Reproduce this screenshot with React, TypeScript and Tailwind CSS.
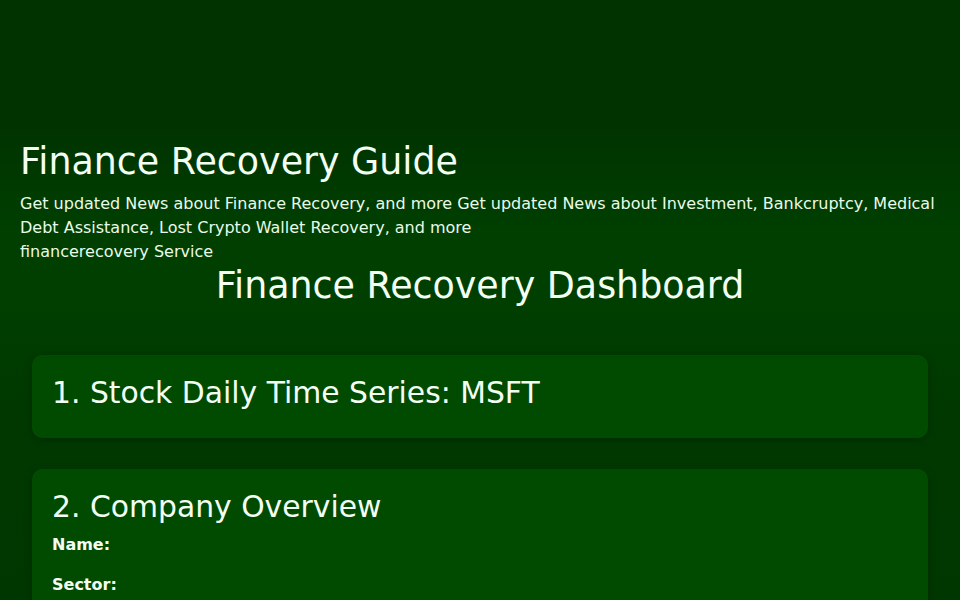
import React from "react";

export default function App() {
  return (
    <div className="min-h-screen w-full font-['DejaVu_Sans','Liberation_Sans',sans-serif] text-[#f4fff4] bg-[linear-gradient(to_bottom,#003300_0px,#003300_125px,#003f00_230px,#003f00_300px,#003900_400px,#003700_600px)]">
      <div className="h-[120px]" />
      <header className="px-5 pt-5">
        <h1 className="text-[36.4px] leading-[43px] font-normal mb-[9px]">Finance Recovery Guide</h1>
        <p className="text-[16px] leading-6 text-[#eafaea]">
          Get updated News about Finance Recovery, and more Get updated News about Investment, Bankcruptcy, Medical Debt Assistance, Lost Crypto Wallet Recovery, and more
        </p>
        <p className="text-[16px] leading-6 text-[#eafaea]">financerecovery Service</p>
      </header>
      <h1 className="text-[36.4px] leading-[43px] text-center font-normal">Finance Recovery Dashboard</h1>
      <main className="px-8 pt-[48px] flex flex-col gap-[31px]">
        <section className="rounded-[10px] bg-[#004b00] shadow-[0_2px_8px_rgba(0,0,0,0.25)] px-5 pt-5 pb-5">
          <h2 className="text-[29.8px] leading-9 mb-[7px]">1. Stock Daily Time Series: MSFT</h2>
        </section>
        <section className="rounded-[10px] bg-[#004b00] shadow-[0_2px_8px_rgba(0,0,0,0.25)] px-5 pt-5 pb-5">
          <h2 className="text-[29.8px] leading-9 mb-2">2. Company Overview</h2>
          <p className="text-[16px] leading-6 font-bold">Name: </p>
          <p className="text-[16px] leading-6 font-bold mt-4">Sector: </p>
          <p className="text-[16px] leading-6 font-bold mt-4">Industry: </p>
          <p className="text-[16px] leading-6 font-bold mt-4">Market Cap: </p>
        </section>
      </main>
    </div>
  );
}
